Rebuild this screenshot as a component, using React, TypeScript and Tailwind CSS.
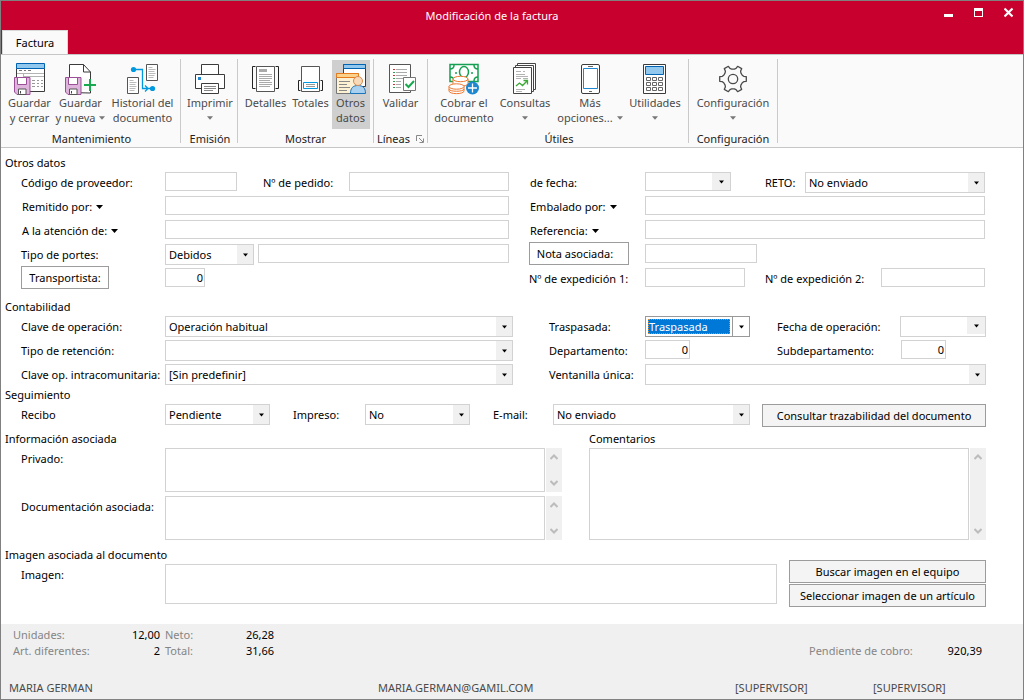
import type { ReactNode } from "react";

const TEXT_LINE = "shrink-0 whitespace-nowrap leading-[22px]";
const FIELD = "mt-0.5 h-[19px] min-w-0 border border-[#d2d2d2] bg-white px-[3px] outline-none";

function Floppy() {
  return (
    <g>
      <path d="M.5 14.500h15.500v17H3l-2.500-2.500z" fill="#dfb4dc" stroke="#9b4f96" />
      <path d="M3.500 14.500v7h9v-7z" fill="#fff" stroke="#9b4f96" />
      <path d="M4.500 31.500v-5.500h7.500v5.500z" fill="#fff" stroke="#555" />
      <path d="M6.500 28v2.500" stroke="#444" />
    </g>
  );
}

function Svg({ children }: { children: ReactNode }) {
  return (
    <svg width="32" height="32" viewBox="0 0 32 32" fill="none" aria-hidden="true" className="shrink-0">
      {children}
    </svg>
  );
}

const SaveClose = () => (
  <Svg>
    <path d="M2.500 5.500h28v23h-28z" fill="#fff" stroke="#3b3b3b" />
    <path d="M2.500.5h28v5h-28z" fill="#92c8ee" stroke="#0063b1" />
    <path d="M5 7.500h3M10 7.500h2M14 7.500h3" stroke="#777" />
    <path d="M3 10.500h27M9.500 10.500v4M10 13.500h20" stroke="#b3b3b3" />
    <path d="M18 17.500h3M23 17.500h2M27 17.500h2M18 20.500h3M23 20.500h2M27 20.500h2M18 23.500h3M23 23.500h2M27 23.500h2" stroke="#999" />
    <Floppy />
  </Svg>
);

const SaveNew = () => (
  <Svg>
    <path d="M4.500 29.500v-28h14l7 7.500v21z" fill="#fff" stroke="#3b3b3b" />
    <path d="M18.500 1.500v7.500h7" stroke="#3b3b3b" />
    <path d="M17 16h15v11h-15z" fill="#fafafa" />
    <Floppy />
    <path d="M25 16v12M19 22h12" stroke="#18a84f" strokeWidth="2" />
  </Svg>
);

const History = () => (
  <Svg>
    <path d="M19.500 1.500h11v16h-11z" fill="#fff" stroke="#555" />
    <path d="M21.500 4.500h4M21.500 6.500h7M21.500 8.500h6M21.500 10.500h7M21.500 12.500h6M21.500 14.500h5" stroke="#bbb" />
    <path d="M.5 14.500h11v16h-11z" fill="#fff" stroke="#555" />
    <path d="M2.500 17.500h4M2.500 19.500h7M2.500 21.500h6M2.500 23.500h7M2.500 25.500h6M2.500 27.500h5" stroke="#bbb" />
    <path d="M7 6.500h8.500v19h9M18 22.500l3 3-3 3" stroke="#0099e0" strokeWidth="1.300" />
    <circle cx="6.500" cy="6.500" r="2.600" fill="#0099e0" />
    <circle cx="25.500" cy="25.500" r="2.600" fill="#0099e0" />
  </Svg>
);

const Printer = () => (
  <Svg>
    <path d="M7.500 11.500v-10h17v10M1.500 11.500h29v14h-29z" fill="#fff" stroke="#3b3b3b" />
    <path d="M7.500 20.500h17v10h-17z" fill="#fff" stroke="#3b3b3b" />
    <path d="M4 14h3v3h-3z" fill="#1e87d0" />
    <path d="M10 23.500h12M10 25.500h12M10 27.500h9" stroke="#888" />
  </Svg>
);

const Details = () => (
  <Svg>
    <path d="M5.500 3.500h-3v22h3M25.500 3.500h3v22h-3" stroke="#222" />
    <path d="M6.500 3.500h18v25h-18z" fill="#fff" stroke="#555" />
    <path d="M9 6h8v3h-8z" fill="#aaa" />
    <path d="M9 11.500h13M9 13.500h13M9 15.500h13M9 17.500h11M9 19.500h13M9 21.500h13M9 23.500h11" stroke="#aaa" />
  </Svg>
);

const Totals = () => (
  <Svg>
    <path d="M5.500 17.500h-2v10h2M25.500 17.500h2v10h-2" stroke="#222" />
    <path d="M6.500 3.500h18v25h-18z" fill="#fff" stroke="#555" />
    <path d="M8.500 19.500h14v6h-14z" fill="#fff" stroke="#0099e0" />
    <path d="M11 21.500h9M11 23.500h9" stroke="#999" />
  </Svg>
);

const OtherData = () => (
  <Svg>
    <path d="M8.500 1.500h22v22h-22z" fill="#fff" stroke="#3b3b3b" />
    <path d="M8.500 1.500h22v4h-22z" fill="#92c8ee" stroke="#0063b1" />
    <path d="M1.500 10.500h22v20h-22z" fill="#fcf1d3" stroke="#777" />
    <path d="M1.500 10.500h22v4h-22z" fill="#fbd28c" stroke="#e77b1c" />
    <path d="M4 18.500h11M4 21.500h8M4 24.500h11M4 27.500h8" stroke="#888" />
    <path d="M15.500 30.500c0-5 2-8 7.500-8s7.500 3 7.500 8z" fill="#a9d0ef" stroke="#1a73bb" />
    <circle cx="23" cy="18" r="4.500" fill="#f8d9b8" stroke="#d88a50" />
  </Svg>
);

const Validate = () => (
  <Svg>
    <path d="M4.500 1.500h21v28h-21z" fill="#fff" stroke="#555" />
    <path d="M11 6.500h11M11 9.500h11M11 12.500h11M11 15.500h8M11 18.500h5M11 21.500h5M11 24.500h5" stroke="#aaa" />
    <path d="M8 6.500h2M8 12.500h2M8 21.500h2" stroke="#c33" />
    <path d="M8 9.500h2M8 15.500h2M8 18.500h2M8 24.500h2" stroke="#29a354" />
    <path d="M18.500 14.500h12v13h-12z" fill="#fff" stroke="#777" />
    <path d="M20.500 21l3 3 5.500-6" stroke="#18a84f" strokeWidth="2" />
  </Svg>
);

const Money = () => (
  <Svg>
    <path d="M2 1.500h28v17h-28z" fill="#fff" stroke="#14a052" strokeWidth="1.500" />
    <path d="M2 6c3 0 4-2 4-4M26 2c0 2 1 4 4 4M2 14c3 0 4 2 4 4M26 18c0-2 1-4 4-4" stroke="#14a052" strokeWidth="1.500" />
    <ellipse cx="16" cy="9" rx="4.500" ry="5.500" stroke="#14a052" strokeWidth="1.500" />
    <circle cx="8" cy="10" r="1" fill="#14a052" />
    <circle cx="24" cy="10" r="1" fill="#14a052" />
    <path d="M5 16v4.500c0 3.500 15 3.500 15 0V16z" fill="#fff" stroke="#ee7830" />
    <ellipse cx="12.500" cy="16" rx="7.500" ry="2.700" fill="#fff" stroke="#ee7830" />
    <path d="M1 23.500v4.500c0 3.500 15 3.500 15 0v-4.500z" fill="#fff" stroke="#ee7830" />
    <path d="M1 26c0 3 15 3 15 0" stroke="#ee7830" />
    <ellipse cx="8.500" cy="23.500" rx="7.500" ry="2.700" fill="#fff" stroke="#ee7830" />
    <circle cx="24.500" cy="25" r="6.500" fill="#1e87d0" />
    <path d="M24.500 20.500v9M20 25h9" stroke="#fff" strokeWidth="1.300" />
  </Svg>
);

const Queries = () => (
  <Svg>
    <path d="M8.500.5h18v26h-18z" fill="#fff" stroke="#444" />
    <path d="M6.500 2.500h18v26h-18z" fill="#fff" stroke="#444" />
    <path d="M4.500 4.500h18v26h-18z" fill="#fff" stroke="#444" />
    <path d="M7 8.500h5M14 8.500h2M7 11.500h9M7 13.500h12M7 15.500h5M14 15.500h5M7 26.500h9M7 28.500h6" stroke="#b3b3b3" />
    <path d="M7 23l3.500-3 3 2.500 5-5M14.500 17.500h4v4" stroke="#3aa935" strokeWidth="1.300" />
  </Svg>
);

const Phone = () => (
  <Svg>
    <rect x="7.500" y="1.500" width="18" height="29" rx="1.500" fill="#fff" stroke="#3b3b3b" />
    <path d="M9.500 5.500h14v20h-14z" fill="#fff" stroke="#1e87d0" />
    <path d="M14 3.500h5M15 28.500h3" stroke="#666" />
  </Svg>
);

const Calculator = () => (
  <Svg>
    <path d="M4.500 1.500h22v29h-22z" fill="#fff" stroke="#3b3b3b" />
    <path d="M6.500 3.500h18v8h-18z" fill="#92c8ee" stroke="#0063b1" />
    <path d="M7.500 14.500h4v3h-4zM13.500 14.500h4v3h-4zM19.500 14.500h4v3h-4zM7.500 19.500h4v3h-4zM13.500 19.500h4v3h-4zM19.500 19.500h4v3h-4zM7.500 24.500h4v3h-4zM13.500 24.500h4v3h-4zM19.500 24.500h4v3h-4z" stroke="#666" />
  </Svg>
);

const gearPoints = [0, 60, 120, 180, 240, 300]
  .flatMap((a) =>
    [
      [a - 22, 10],
      [a - 14, 11],
      [a - 10, 13.5],
      [a + 10, 13.5],
      [a + 14, 11],
      [a + 22, 10],
    ].map(([deg, r]) => {
      const t = (deg * Math.PI) / 180;
      return `${(16 + r * Math.cos(t)).toFixed(2)},${(16 + r * Math.sin(t)).toFixed(2)}`;
    }),
  )
  .join(" ");

const Gear = () => (
  <Svg>
    <polygon points={gearPoints} stroke="#4a4a4a" strokeWidth="1.300" strokeLinejoin="round" />
    <circle cx="16" cy="16" r="4.700" stroke="#4a4a4a" strokeWidth="1.300" />
  </Svg>
);

function Caret({ className = "text-black" }: { className?: string }) {
  return (
    <svg width="7" height="4" viewBox="0 0 7 4" aria-hidden="true" className={`shrink-0 ${className}`}>
      <path d="M0 0h7L3.500 4z" fill="currentColor" />
    </svg>
  );
}

type Tool = { icon: ReactNode; top: string; bottom?: string; caret?: boolean; width: string; active?: boolean };

function ToolButton({ icon, top, bottom, caret, width, active }: Tool) {
  return (
    <button
      type="button"
      className={`flex h-[69px] shrink-0 flex-col items-center whitespace-nowrap pt-[3px] leading-[15px] text-[#4a4a4a] ${width} ${active ? "bg-[#cfcfcf]" : ""}`}
    >
      {icon}
      <span>{top}</span>
      <span className="flex h-[15px] items-center justify-center gap-1">
        {bottom}
        {caret && <Caret className="w-[6px] text-[#777]" />}
      </span>
    </button>
  );
}

function Group({ label, tools, width, launcher }: { label: string; tools: Tool[]; width: string; launcher?: boolean }) {
  return (
    <section className={`flex shrink-0 flex-col border-r border-[#cacaca] ${width}`} aria-label={label}>
      <div className="mt-px flex justify-center">
        {tools.map((t) => (
          <ToolButton key={t.top + (t.bottom ?? "")} {...t} />
        ))}
      </div>
      <div className="mt-0.5 flex h-4 items-center justify-center gap-1.5 text-[#222]">
        {label}
        {launcher && (
          <button type="button" aria-label="Más opciones de líneas">
            <svg width="8" height="8" viewBox="0 0 8 8" fill="none" stroke="#888" aria-hidden="true">
              <path d="M.5 6V.5H6M3 3l4 4M7.500 3.500v4h-4" />
            </svg>
          </button>
        )}
      </div>
    </section>
  );
}

function Label({ id, children, width = "" }: { id: string; children: ReactNode; width?: string }) {
  return (
    <label htmlFor={id} className={`mt-0.5 ${TEXT_LINE} ${width}`}>
      {children}
    </label>
  );
}

function MenuLabel({ children, width }: { children: ReactNode; width: string }) {
  return (
    <div className={`shrink-0 ${width}`}>
      <button type="button" className={`mt-0.5 ${TEXT_LINE} flex items-center gap-1 pl-px`}>
        {children}
        <Caret />
      </button>
    </div>
  );
}

function Select({ id, value, width }: { id: string; value: string; width: string }) {
  return (
    <div className={`relative mt-0.5 h-[21px] min-w-0 border border-[#d2d2d2] bg-white ${width}`}>
      <select id={id} className="block h-[19px] w-full appearance-none bg-transparent pr-5 pl-[3px] leading-[19px] outline-none">
        <option>{value}</option>
      </select>
      <span className="pointer-events-none absolute inset-y-0 right-0 flex w-4 items-center justify-center bg-[#f0f0f0]">
        <Caret className="w-[5px] text-black" />
      </span>
    </div>
  );
}

function DateField({ id, height }: { id: string; height: string }) {
  return (
    <div className={`mt-0.5 flex w-[86px] shrink-0 border border-[#d2d2d2] bg-white ${height}`}>
      <input id={id} className="min-w-0 flex-1 px-[3px] outline-none" />
      <button type="button" aria-label="Abrir calendario" className="flex h-[17px] w-[18px] items-center justify-center bg-[#f0f0f0]">
        <Caret className="w-[5px] text-black" />
      </button>
    </div>
  );
}

function Memo({ id, height, label }: { id: string; height: string; label?: string }) {
  return (
    <div className={`flex min-w-0 flex-1 gap-px ${height}`}>
      <textarea id={id} aria-label={label} className="h-full min-w-0 flex-1 resize-none overflow-hidden border border-[#d2d2d2] bg-white outline-none" />
      <div className="flex w-4 flex-col items-center justify-between bg-[#f0f0f0] py-1.5" aria-hidden="true">
        <svg width="8" height="6" viewBox="0 0 8 6" fill="none" stroke="#bcbcbc" strokeWidth="2">
          <path d="M.5 5L4 1.500 7.500 5" />
        </svg>
        <svg width="8" height="6" viewBox="0 0 8 6" fill="none" stroke="#bcbcbc" strokeWidth="2">
          <path d="M.5 1L4 4.500 7.500 1" />
        </svg>
      </div>
    </div>
  );
}

function PushButton({ children, className }: { children: ReactNode; className: string }) {
  return (
    <button type="button" className={`h-[23px] shrink-0 whitespace-nowrap border border-[#9c9c9c] ${className}`}>
      {children}
    </button>
  );
}

const Row = ({ children }: { children: ReactNode }) => <div className="flex h-6 items-start">{children}</div>;
const Heading = ({ children }: { children: ReactNode }) => <h2 className="-ml-4 h-4 leading-[18px]">{children}</h2>;

export default function App() {
  return (
    <div className="flex min-h-screen flex-col border border-[#808080] bg-white font-['Noto_Sans','Open_Sans',sans-serif] text-[11px] leading-4 text-black">
      <header className="flex h-[53px] flex-col justify-between bg-[#c8002d] text-white">
        <div className="grid grid-cols-[1fr_auto_1fr] items-start">
          <span />
          <h1 className="-ml-10 pt-[7px]">Modificación de la factura</h1>
          <div className="flex items-center justify-end gap-5 pt-1.5 pr-[9px]">
            <button type="button" aria-label="Minimizar">
              <svg width="10" height="12" viewBox="0 0 10 12" aria-hidden="true"><path d="M0 7h9v3H0z" fill="#fff" /></svg>
            </button>
            <button type="button" aria-label="Maximizar">
              <svg width="10" height="12" viewBox="0 0 10 12" aria-hidden="true"><path d="M0 1h9v9H0zM1 4v5h7V4z" fill="#fff" fillRule="evenodd" /></svg>
            </button>
            <button type="button" aria-label="Cerrar">
              <svg width="10" height="12" viewBox="0 0 10 12" aria-hidden="true"><path d="M.5 1.500l8 8M8.500 1.500l-8 8" stroke="#fff" strokeWidth="2.200" /></svg>
            </button>
          </div>
        </div>
        <nav className="flex pl-px">
          <button type="button" className="h-6 w-[66px] border border-b-0 border-[#d8d8d8] bg-[#fafafa] text-black">Factura</button>
        </nav>
      </header>

      <div className="flex h-[94px] border-y border-[#c6c6c6] bg-[#fafafa] py-1">
        <Group label="Mantenimiento" width="w-[180px] pl-0.5" tools={[
          { icon: <SaveClose />, top: "Guardar", bottom: "y cerrar", width: "w-[50px]" },
          { icon: <SaveNew />, top: "Guardar", bottom: "y nueva", caret: true, width: "w-[52px]" },
          { icon: <History />, top: "Historial del", bottom: "documento", width: "w-[72px]" },
        ]} />
        <Group label="Emisión" width="w-[57px] pl-0.5" tools={[{ icon: <Printer />, top: "Imprimir", caret: true, width: "w-[50px]" }]} />
        <Group label="Mostrar" width="w-[136px]" tools={[
          { icon: <Details />, top: "Detalles", width: "w-[48px]" },
          { icon: <Totals />, top: "Totales", width: "w-[42px]" },
          { icon: <OtherData />, top: "Otros", bottom: "datos", width: "w-[38px]", active: true },
        ]} />
        <Group label="Líneas" width="w-[54px]" launcher tools={[{ icon: <Validate />, top: "Validar", width: "w-[46px]" }]} />
        <Group label="Útiles" width="w-[261px] pl-0.5" tools={[
          { icon: <Money />, top: "Cobrar el", bottom: "documento", width: "w-[62px]" },
          { icon: <Queries />, top: "Consultas", caret: true, width: "w-[60px]" },
          { icon: <Phone />, top: "Más", bottom: "opciones...", caret: true, width: "w-[70px]" },
          { icon: <Calculator />, top: "Utilidades", caret: true, width: "w-[60px]" },
        ]} />
        <Group label="Configuración" width="w-[89px]" tools={[{ icon: <Gear />, top: "Configuración", caret: true, width: "w-[80px]" }]} />
      </div>

      <main className="flex-1 pt-1.5 pr-[37px] pb-4 pl-5">
        <section>
          <Heading>Otros datos</Heading>
          <div className="grid grid-cols-[minmax(0,488fr)_minmax(0,456fr)] gap-x-5 pr-px">
            <div>
              <Row>
                <Label id="codigo" width="w-36">Código de proveedor:</Label>
                <input id="codigo" className={`${FIELD} w-[72px]`} />
                <Label id="pedido" width="ml-[26px] w-[86px]">Nº de pedido:</Label>
                <input id="pedido" className={`${FIELD} flex-1`} />
              </Row>
              <Row>
                <MenuLabel width="w-36">Remitido por:</MenuLabel>
                <input aria-label="Remitido por" className={`${FIELD} flex-1`} />
              </Row>
              <Row>
                <MenuLabel width="w-36">A la atención de:</MenuLabel>
                <input aria-label="A la atención de" className={`${FIELD} flex-1`} />
              </Row>
              <Row>
                <Label id="portes" width="w-36">Tipo de portes:</Label>
                <Select id="portes" value="Debidos" width="w-[89px] shrink-0" />
                <input aria-label="Detalle de portes" className={`${FIELD} ml-1 flex-1`} />
              </Row>
              <Row>
                <div className="w-36 shrink-0">
                  <PushButton className="w-[88px] bg-white">Transportista:</PushButton>
                </div>
                <input aria-label="Transportista" defaultValue="0" className={`${FIELD} w-10 pr-px text-right`} />
              </Row>
            </div>
            <div>
              <Row>
                <Label id="fecha" width="w-[116px] pl-px">de fecha:</Label>
                <DateField id="fecha" height="h-[19px]" />
                <Label id="reto" width="ml-[34px] w-10">RETO:</Label>
                <Select id="reto" value="No enviado" width="flex-1" />
              </Row>
              <Row>
                <MenuLabel width="w-[116px]">Embalado por:</MenuLabel>
                <input aria-label="Embalado por" className={`${FIELD} flex-1`} />
              </Row>
              <Row>
                <MenuLabel width="w-[116px]">Referencia:</MenuLabel>
                <input aria-label="Referencia" className={`${FIELD} flex-1`} />
              </Row>
              <Row>
                <div className="w-[116px] shrink-0">
                  <PushButton className="w-[100px] bg-white pr-2">Nota asociada:</PushButton>
                </div>
                <input aria-label="Nota asociada" className={`${FIELD} w-28`} />
              </Row>
              <Row>
                <Label id="exp1" width="w-[116px]">Nº de expedición 1:</Label>
                <input id="exp1" className={`${FIELD} w-[100px]`} />
                <Label id="exp2" width="ml-5 w-[116px]">Nº de expedición 2:</Label>
                <input id="exp2" className={`${FIELD} flex-1`} />
              </Row>
            </div>
          </div>
        </section>

        <section className="mt-2">
          <Heading>Contabilidad</Heading>
          <div className="grid grid-cols-[minmax(0,492fr)_minmax(0,437fr)] gap-x-9">
            <div>
              <Row>
                <Label id="clave" width="w-36">Clave de operación:</Label>
                <Select id="clave" value="Operación habitual" width="flex-1" />
              </Row>
              <Row>
                <Label id="retencion" width="w-36">Tipo de retención:</Label>
                <Select id="retencion" value="" width="flex-1" />
              </Row>
              <Row>
                <Label id="intra" width="w-36">Clave op. intracomunitaria:</Label>
                <Select id="intra" value="[Sin predefinir]" width="flex-1" />
              </Row>
            </div>
            <div>
              <Row>
                <Label id="traspasada" width="w-24">Traspasada:</Label>
                <div className="mt-0.5 flex h-[21px] w-[105px] shrink-0 border border-[#999] bg-white">
                  <select id="traspasada" className="m-0.5 min-w-0 flex-1 appearance-none border border-dotted border-[#e08a30] bg-[#0078d7] leading-[13px] text-white outline-none">
                    <option>Traspasada</option>
                  </select>
                  <span className="flex w-[17px] items-center justify-center border-l border-[#999]">
                    <Caret className="w-[5px] text-black" />
                  </span>
                </div>
                <Label id="fechaop" width="ml-[27px] mr-auto">Fecha de operación:</Label>
                <DateField id="fechaop" height="h-[21px]" />
              </Row>
              <Row>
                <Label id="depto" width="w-24">Departamento:</Label>
                <input id="depto" defaultValue="0" className={`${FIELD} w-[45px] pr-px text-right`} />
                <Label id="subdepto" width="ml-[87px] mr-auto">Subdepartamento:</Label>
                <input id="subdepto" defaultValue="0" className={`${FIELD} mr-10 w-[45px] pr-px text-right`} />
              </Row>
              <Row>
                <Label id="ventanilla" width="w-24">Ventanilla única:</Label>
                <Select id="ventanilla" value="" width="flex-1" />
              </Row>
            </div>
          </div>
        </section>

        <section>
          <Heading>Seguimiento</Heading>
          <Row>
            <Label id="recibo" width="w-36">Recibo</Label>
            <Select id="recibo" value="Pendiente" width="w-[105px]" />
            <Label id="impreso" width="ml-[23px] w-[72px]">Impreso:</Label>
            <Select id="impreso" value="No" width="w-[105px]" />
            <Label id="email" width="ml-[23px] w-[60px]">E-mail:</Label>
            <Select id="email" value="No enviado" width="flex-1" />
            <PushButton className="mt-0.5 ml-3 w-[224px] bg-[#f4f4f4]">Consultar trazabilidad del documento</PushButton>
          </Row>
        </section>

        <section className="mt-1 grid grid-cols-[minmax(0,541fr)_minmax(0,397fr)] gap-x-[27px]">
          <div>
            <Heading>Información asociada</Heading>
            <div className="mt-0.5 flex">
              <label htmlFor="privado" className={`${TEXT_LINE} w-36`}>Privado:</label>
              <Memo id="privado" height="h-11" />
            </div>
            <div className="mt-1 flex">
              <label htmlFor="docu" className={`${TEXT_LINE} w-36`}>Documentación asociada:</label>
              <Memo id="docu" height="h-11" />
            </div>
          </div>
          <div>
            <h2 className="h-4 leading-[18px]">Comentarios</h2>
            <div className="mt-0.5 flex">
              <Memo id="comentarios" label="Comentarios" height="h-[92px]" />
            </div>
          </div>
        </section>

        <section className="mt-1.5">
          <Heading>Imagen asociada al documento</Heading>
          <div className="flex">
            <Label id="imagen" width="w-36">Imagen:</Label>
            <textarea id="imagen" className="mt-0.5 h-10 min-w-0 flex-1 resize-none overflow-hidden border border-[#d2d2d2] outline-none" />
            <div className="-mt-0.5 ml-3 flex w-[197px] flex-col gap-px">
              <PushButton className="bg-[#f4f4f4]">Buscar imagen en el equipo</PushButton>
              <PushButton className="bg-[#f4f4f4]">Seleccionar imagen de un artículo</PushButton>
            </div>
          </div>
        </section>
      </main>

      <footer className="bg-[#f0f0f0] py-[3px] text-[#4a4a4a]">
        <div className="flex items-center justify-between pr-[41px] pl-3 text-[#858585]">
          <dl className="grid grid-cols-[100px_47px_67px_47px]">
            <dt>Unidades:</dt>
            <dd className="text-right text-black">12,00</dd>
            <dt className="pl-[5px]">Neto:</dt>
            <dd className="text-right text-black">26,28</dd>
            <dt>Art. diferentes:</dt>
            <dd className="text-right text-black">2</dd>
            <dt className="pl-[5px]">Total:</dt>
            <dd className="text-right text-black">31,66</dd>
          </dl>
          <dl className="flex self-end">
            <dt className="w-[126px]">Pendiente de cobro:</dt>
            <dd className="w-[47px] text-right text-black">920,39</dd>
          </dl>
        </div>
        <div className="mt-[21px] grid grid-cols-[369fr_357fr_138fr_150fr] pl-2">
          <span>MARIA GERMAN</span>
          <span>MARIA.GERMAN@GAMIL.COM</span>
          <span>[SUPERVISOR]</span>
          <span>[SUPERVISOR]</span>
        </div>
      </footer>
    </div>
  );
}
